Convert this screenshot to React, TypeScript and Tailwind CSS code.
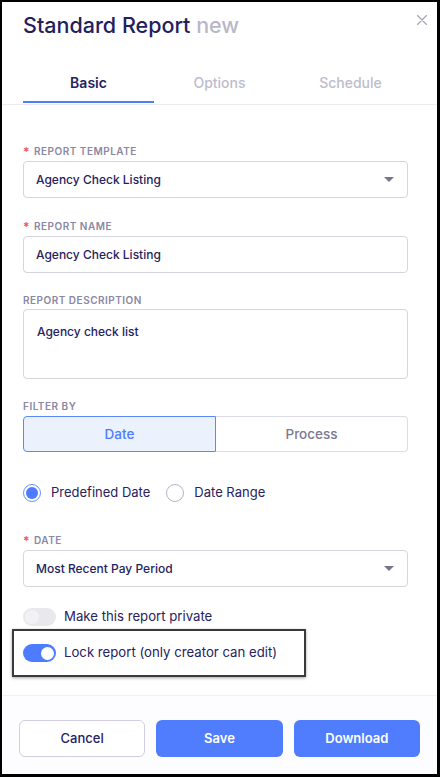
import React from "react";

const Label = ({ text, required }: { text: string; required?: boolean }) => (
  <div className="flex items-center h-[12px] leading-[12px] text-[10px] font-semibold tracking-[0.05em] text-[#8a87a4] uppercase">
    {required && <span className="text-[#f0524f] mr-[4px] text-[12px] leading-[12px] mt-[2px]">*</span>}
    <span>{text}</span>
  </div>
);

const Caret = () => (
  <svg width="10" height="5" viewBox="0 0 10 5" className="shrink-0">
    <path d="M0 0 H10 L5 5 Z" fill="#76748f" />
  </svg>
);

const SelectBox = ({ value }: { value: string }) => (
  <div className="mt-[4px] h-[37px] w-full border border-[#d5d4df] rounded-[4px] flex items-center justify-between pl-[12px] pr-[13px] bg-white">
    <span className="text-[12px] font-medium text-[#262260]">{value}</span>
    <Caret />
  </div>
);

export default function App() {
  return (
    <div
      className="w-[440px] h-[777px] box-border border-l-2 border-t-2 border-r-[3px] border-b-[3px] border-black bg-white flex flex-col"
      style={{ fontFamily: "Inter, 'Noto Sans', sans-serif" }}
    >
      {/* Header */}
      <div className="relative pl-[21px] pt-[9px]">
        <div className="h-[28px] leading-[28px] text-[21.5px] font-medium text-[#23205c]">
          Standard Report <span className="text-[#b9b7c7]">new</span>
        </div>
        <svg
          className="absolute right-[10px] top-[13px]"
          width="10"
          height="10"
          viewBox="0 0 10 10"
        >
          <path d="M0.5 0.5 L9.5 9.5 M9.5 0.5 L0.5 9.5" stroke="#a8a6bc" strokeWidth="1.4" strokeLinecap="round" />
        </svg>
      </div>

      {/* Tabs */}
      <div className="mt-[22px] border-b border-[#ecebf2] pl-[21px] flex">
        <div className="relative w-[131px] h-[43px] flex items-center justify-center text-[14px] font-semibold text-[#262260]">
          Basic
          <div className="absolute left-0 right-0 bottom-[1px] h-[2px] bg-[#4e7cff]" />
        </div>
        <div className="w-[131px] h-[43px] flex items-center justify-center text-[14px] font-medium text-[#bdbccd]">
          Options
        </div>
        <div className="w-[131px] h-[43px] flex items-center justify-center text-[14px] font-medium text-[#bdbccd]">
          Schedule
        </div>
      </div>

      {/* Body */}
      <div className="flex-1 flex flex-col pl-[21px] pr-[29px] pt-[40px]">
        <Label text="Report Template" required />
        <SelectBox value="Agency Check Listing" />

        <div className="mt-[22px]">
          <Label text="Report Name" required />
        </div>
        <div className="mt-[4px] h-[37px] w-full border border-[#d5d4df] rounded-[4px] flex items-center pl-[12px]">
          <span className="text-[12px] font-medium text-[#262260]">Agency Check Listing</span>
        </div>

        <div className="mt-[21px]">
          <Label text="Report Description" />
        </div>
        <div className="mt-[3px] h-[70px] w-full border border-[#d5d4df] rounded-[4px] pl-[13px] pt-[14px]">
          <div className="text-[12px] leading-[16px] font-medium text-[#262260]">Agency check list</div>
        </div>

        <div className="mt-[21px]">
          <Label text="Filter By" />
        </div>
        <div className="mt-[4px] h-[36px] w-full flex">
          <div className="flex-1 h-full flex items-center justify-center bg-[#ebf2fe] border border-[#5b87ff] rounded-l-[4px] text-[13.5px] font-medium text-[#4e7cff]">
            Date
          </div>
          <div className="flex-1 h-full flex items-center justify-center border border-l-0 border-[#dddce6] rounded-r-[4px] text-[13.5px] font-medium text-[#7a7891]">
            Process
          </div>
        </div>

        <div className="mt-[32px] h-[18px] flex items-center">
          <div className="w-[18px] h-[18px] rounded-full border border-[#6b93ff] flex items-center justify-center">
            <div className="w-[12px] h-[12px] rounded-full bg-[#4e7cff]" />
          </div>
          <span className="ml-[10px] text-[13px] text-[#262260]">Predefined Date</span>
          <div className="ml-[16px] w-[18px] h-[18px] rounded-full border border-[#b6b4c6] bg-white" />
          <span className="ml-[10px] text-[13px] text-[#262260]">Date Range</span>
        </div>

        <div className="mt-[32px]">
          <Label text="Date" required />
        </div>
        <SelectBox value="Most Recent Pay Period" />

        <div className="mt-[21px] h-[18px] flex items-center">
          <div className="w-[33px] h-[18px] rounded-full bg-[#e8e8ed] flex items-center pl-[2px]">
            <div className="w-[14px] h-[14px] rounded-full bg-[#f2f2f5]" />
          </div>
          <span className="ml-[8px] text-[13.2px] text-[#262260]">Make this report private</span>
        </div>

        <div className="mt-[3px] -ml-[11px] w-[294px] h-[48px] border-2 border-[#3a3a3a] shadow-[0_1px_3px_rgba(0,0,0,0.35)] flex items-center pl-[9px]">
          <div className="w-[33px] h-[18px] rounded-full bg-[#4e7cff] flex items-center justify-end pr-[2px]">
            <div className="w-[13px] h-[13px] rounded-full bg-white" />
          </div>
          <span className="ml-[8px] text-[13.2px] text-[#262260]">Lock report (only creator can edit)</span>
        </div>
      </div>

      {/* Footer */}
      <div className="border-t border-[#f1f0f5] bg-[#fdfcff] px-[17px] pt-[24px] pb-[17px] grid grid-cols-3 gap-[11px]">
        <button className="h-[37px] rounded-[6px] border border-[#d0cee0] bg-white text-[13px] font-medium text-[#262260]">
          Cancel
        </button>
        <button className="h-[37px] rounded-[6px] bg-[#4f7dfd] text-[13px] font-semibold text-white">
          Save
        </button>
        <button className="h-[37px] rounded-[6px] bg-[#4f7dfd] text-[13px] font-semibold text-white">
          Download
        </button>
      </div>
    </div>
  );
}
